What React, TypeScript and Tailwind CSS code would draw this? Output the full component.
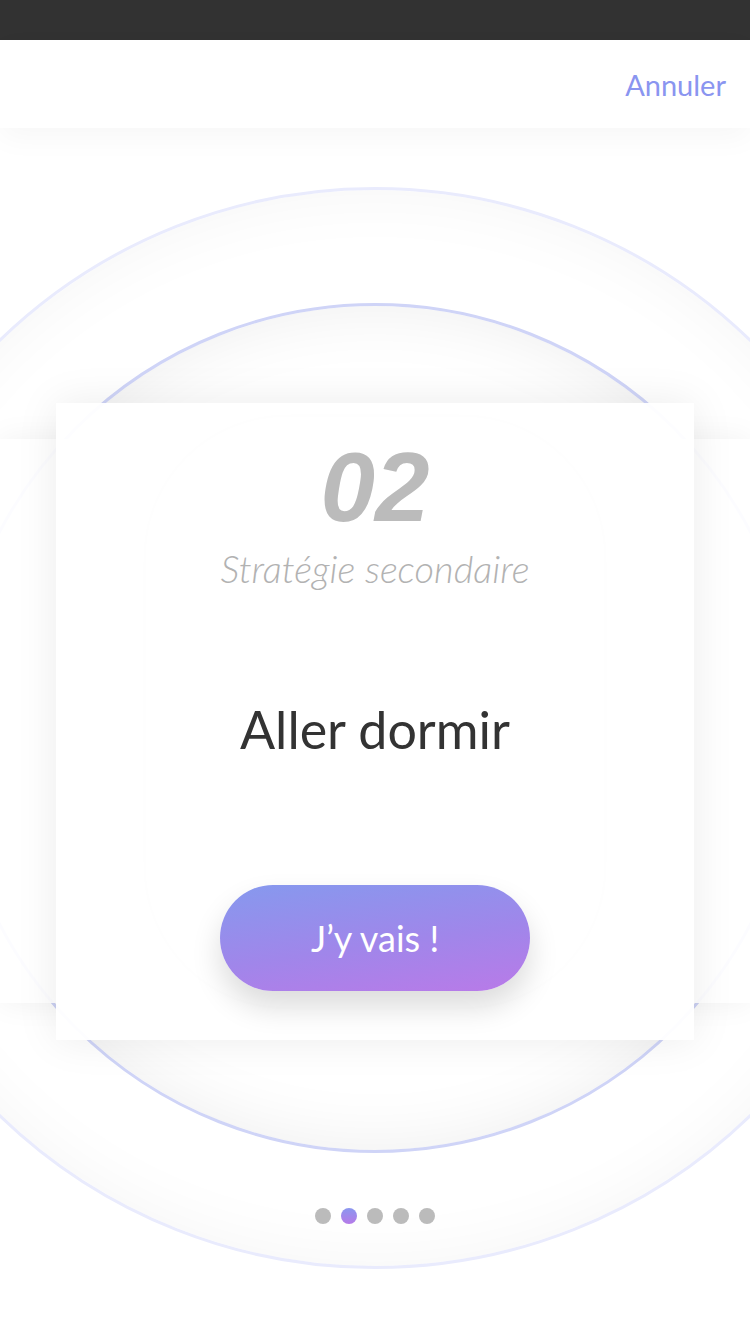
import React from "react";

export default function App() {
  const dots = [0, 1, 2, 3, 4];
  return (
    <div className="relative flex h-[1334px] w-[750px] flex-col overflow-hidden bg-white">
      <div className="h-[40px] w-full shrink-0 bg-[#323232]" />
      <header className="relative z-30 flex h-[88px] w-full shrink-0 items-center justify-end bg-white pr-[24px] shadow-[0_10px_28px_rgba(0,0,0,0.035)]">
        <span className="font-['Lato',sans-serif] text-[29px] leading-none text-[#8a95f0]">Annuler</span>
      </header>

      <main className="relative flex flex-1 flex-col items-center">
        {/* decorative rings */}
        <div className="absolute left-[-166px] top-[59px] h-[1082px] w-[1082px] rounded-full border-[3px] border-[#e9ebfd] bg-white shadow-[inset_0_0_70px_rgba(0,0,0,0.045)]" />
        <div className="absolute left-[-50px] top-[175px] h-[850px] w-[850px] rounded-full border-[3px] border-[#cfd4f7] bg-white shadow-[inset_0_0_70px_rgba(0,0,0,0.07)]" />

        {/* back band */}
        <div className="absolute left-0 top-[311px] h-[564px] w-full bg-white/[0.93] shadow-[0_0_30px_rgba(0,0,0,0.06)]" />

        {/* card */}
        <section className="relative z-10 mt-[275px] flex h-[637px] w-[638px] flex-col items-center bg-white/[0.95] shadow-[0_0_40px_rgba(0,0,0,0.08)]">
          <div className="pointer-events-none absolute left-[90px] top-[14px] h-[590px] w-[458px] rounded-[140px] shadow-[0_0_12px_rgba(60,70,160,0.012)]" />
          <div className="relative mt-[35px] font-['Liberation_Sans',Arial,sans-serif] text-[98px] font-bold italic leading-none text-[#bbbbbb]">
            02
          </div>
          <div className="relative mt-[13px] font-['Lato',sans-serif] text-[38px] font-light italic leading-none text-[#b2b2b2]">
            Stratégie secondaire
          </div>
          <div className="relative mt-[116px] font-['Lato',sans-serif] text-[52px] leading-none text-[#333333]">
            Aller dormir
          </div>
          <button className="relative mt-[130px] flex h-[106px] w-[310px] items-center justify-center rounded-full bg-[linear-gradient(172deg,#8699ee_0%,#a086ea_55%,#b97ae8_100%)] shadow-[0_16px_30px_rgba(0,0,0,0.14)]">
            <span className="font-['Lato',sans-serif] text-[36px] leading-none text-white">J’y vais !</span>
          </button>
        </section>

        {/* pager dots */}
        <div className="relative z-10 mt-[168px] flex items-center gap-[10px]">
          {dots.map((i) =>
            i === 1 ? (
              <span key={i} className="h-[16px] w-[16px] rounded-full bg-[linear-gradient(180deg,#8a97ef,#b67ae8)]" />
            ) : (
              <span key={i} className="h-[16px] w-[16px] rounded-full bg-[#bbbbbb]" />
            )
          )}
        </div>
      </main>
    </div>
  );
}
